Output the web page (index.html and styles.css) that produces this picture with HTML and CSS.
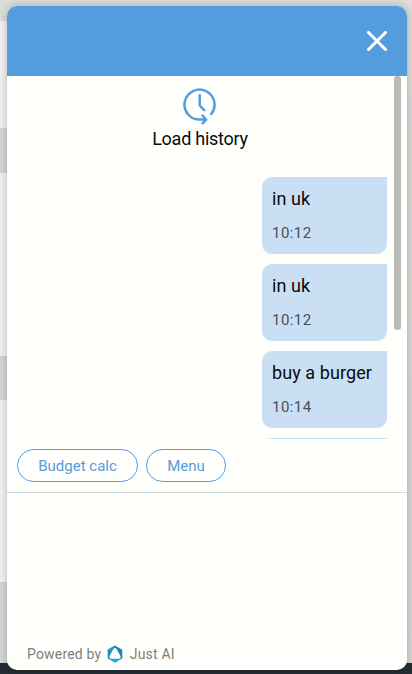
FILE: index.html
```html
<!DOCTYPE html>
<html lang="en">
<head>
<meta charset="utf-8">
<title>Chat</title>
<link rel="stylesheet" href="styles.css">
</head>
<body>
<main class="widget">
  <header class="header">
    <button class="close" aria-label="Close">
      <svg width="20" height="20" viewBox="0 0 20 20"><path d="M1.5 1.5 18.5 18.5M18.5 1.5 1.5 18.5" fill="none" stroke="#fff" stroke-width="3" stroke-linecap="round"/></svg>
    </button>
  </header>
  <section class="history">
    <div class="messages">
      <div class="load">
        <svg width="36" height="38" viewBox="0 0 36 38" fill="none" stroke="#559de0" stroke-width="2.5" stroke-linecap="round" stroke-linejoin="round"><path d="M29.2 26A15 15 0 1 0 17.5 31.6H23M20.6 27.6 24.2 31.7 20.6 35.3M17.7 7.2V17.5L22.2 22.2"/></svg>
        <span class="load-label">Load history</span>
      </div>
      <div class="bubble"><p class="text">in uk</p><time class="time">10:12</time></div>
      <div class="bubble"><p class="text">in uk</p><time class="time">10:12</time></div>
      <div class="bubble"><p class="text">buy a burger</p><time class="time">10:14</time></div>
      <div class="bubble"></div>
    </div>
    <div class="scrollbar"></div>
  </section>
  <nav class="replies">
    <button class="reply budget">Budget calc</button>
    <button class="reply menu">Menu</button>
  </nav>
  <div class="composer"></div>
  <footer class="footer">
    <span>Powered by</span>
    <svg class="logo" width="16" height="18" viewBox="0 0 16 18"><path d="M8 .6 15.3 4.7V13.2L8 17.4.7 13.2V4.7Z" fill="#178bb5"/><path d="M8 .6.7 4.7V7L6 5Z" fill="#2499c4"/><path d="M.7 13.2 8 17.4 15.3 13.2Z" fill="#25a4d2"/><path d="M8 3Q9.2 3 10.2 5L13.3 10.8Q14.3 13.6 11.7 13.7H4.3Q1.7 13.6 2.7 10.8L5.8 5Q6.8 3 8 3Z" fill="#fff"/></svg>
    <span>Just AI</span>
  </footer>
</main>
</body>
</html>
```
FILE: styles.css
```css
* { box-sizing: border-box; }

body {
  margin: 0;
  height: 674px;
  padding: 6px 5px 4px 7px;
  overflow: hidden;
  font-family: Roboto, "Liberation Sans", sans-serif;
  background:
    linear-gradient(#dcdedc, #d6d8d7) 7px 0 / 405px 663px no-repeat,
    linear-gradient(#dcdedc 0 21px, #f2f2f2 21px 128px, #d3d6d6 128px 173px, #f2f2f2 173px 356px, #d3d6d6 356px 400px, #f2f2f2 400px 582px, #d3d6d6 582px 663px, #232d32 663px);
}

.widget {
  display: flex;
  flex-direction: column;
  height: 664px;
  border-radius: 10px;
  overflow: hidden;
  background: #fffffc;
  box-shadow: 0 0 8px rgba(0, 0, 0, .25);
}

.header {
  display: flex;
  flex: none;
  justify-content: flex-end;
  align-items: center;
  height: 70px;
  padding-right: 20px;
  background: #539ddf;
}

.close {
  display: flex;
  padding: 0;
  border: 0;
  background: none;
}

.history {
  display: flex;
  flex: none;
  height: 363px;
  overflow: hidden;
}

.messages {
  display: flex;
  flex: 1;
  flex-direction: column;
  gap: 10px;
  align-items: flex-end;
  padding: 12px 7px 0 0;
}

.load {
  display: flex;
  flex: none;
  flex-direction: column;
  align-items: center;
  align-self: stretch;
  height: 79px;
  padding-right: 2px;
  margin-left: 8px;
}

.load-label {
  margin-top: 3px;
  font-size: 18px;
  line-height: 20px;
  letter-spacing: -.25px;
  color: #080c0e;
}

.bubble {
  flex: none;
  width: 125px;
  height: 77px;
  padding: 11px 10px;
  border-radius: 10px 0 10px 10px;
  background: #cadff3;
}

.text {
  margin: 0;
  font-size: 18px;
  line-height: 22px;
  letter-spacing: .08px;
  color: #080c0e;
  white-space: nowrap;
}

.time {
  display: block;
  margin-top: 13px;
  font-size: 15px;
  line-height: 20px;
  letter-spacing: .45px;
  color: #43515a;
}

.scrollbar {
  width: 7px;
  height: 254px;
  margin-right: 6px;
  border-radius: 3px;
  background: #babcb8;
}

.replies {
  display: flex;
  flex: none;
  gap: 8px;
  height: 54px;
  padding: 10px;
  border-bottom: 1px solid #d3dad9;
}

.reply {
  height: 33px;
  padding: 0;
  border: 1px solid #559de0;
  border-radius: 17px;
  background: none;
  font: 15px Roboto, "Liberation Sans", sans-serif;
  color: #559bda;
}

.budget { width: 121px; }
.menu { width: 80px; }

.composer { flex: 1; }

.footer {
  display: flex;
  flex: none;
  align-items: center;
  height: 32px;
  padding-left: 20px;
  font-size: 14px;
  letter-spacing: .18px;
  color: #7c7f7e;
}

.logo { margin: 0 7px 0 5.5px; }
```
